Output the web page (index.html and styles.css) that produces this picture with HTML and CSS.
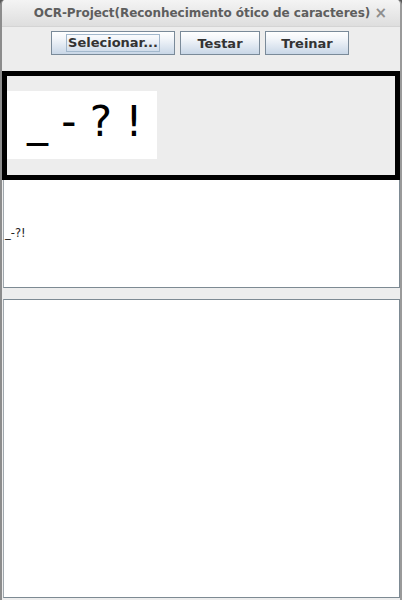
FILE: index.html
```html
<!DOCTYPE html>
<html>
<head>
<meta charset="utf-8">
<link rel="stylesheet" href="styles.css">
</head>
<body>
<div class="window">
  <div class="titlebar">
    <span class="title">OCR-Project(Reconhecimento ótico de caracteres)</span>
    <span class="close">×</span>
  </div>
  <div class="toolbar">
    <button class="btn btn-select"><span class="focus">Selecionar...</span></button>
    <button class="btn btn-test">Testar</button>
    <button class="btn btn-train">Treinar</button>
  </div>
  <div class="imgpanel">
    <div class="imgbox"><span class="glyphs">_ - ? !</span></div>
  </div>
  <div class="result"><span class="result-text">_-?!</span></div>
  <div class="divider"></div>
  <div class="output"></div>
</div>
</body>
</html>
```

FILE: styles.css
```css
html, body {
  margin: 0;
  padding: 0;
  width: 402px;
  height: 600px;
  overflow: hidden;
  background: #5a5a5a;
}
.window {
  width: 402px;
  height: 600px;
  box-sizing: border-box;
  background: #ededed;
  border-left: 2px solid #8c8c8c;
  border-right: 2px solid #9a9a9a;
  border-radius: 5px 5px 0 0;
  display: flex;
  flex-direction: column;
  overflow: hidden;
}
.titlebar {
  height: 27px;
  flex: none;
  background: linear-gradient(#f4f4f4, #dedede);
  display: flex;
  align-items: center;
  justify-content: center;
  position: relative;
  border-bottom: 1px solid #d4d4d4;
  box-sizing: border-box;
}
.title {
  font-family: "DejaVu Sans", sans-serif;
  font-weight: bold;
  font-size: 12px;
  color: #5e5e5e;
  margin-left: 2px;
  letter-spacing: -0.05px;
}
.close {
  position: absolute;
  right: 13px;
  top: 4px;
  font-family: "DejaVu Sans", sans-serif;
  font-weight: bold;
  font-size: 15px;
  color: #8e8e8e;
}
.toolbar {
  flex: none;
  display: flex;
  gap: 5px;
  padding: 4px 0 0 49px;
  height: 44px;
  box-sizing: border-box;
}
.btn {
  height: 24px;
  margin: 0;
  padding: 0;
  border: 1px solid #7a8a99;
  border-radius: 0;
  background: linear-gradient(#ffffff 0%, #f3f6fa 30%, #c9d7e7 100%);
  font-family: "DejaVu Sans", sans-serif;
  font-weight: bold;
  font-size: 13px;
  color: #333333;
  display: flex;
  align-items: center;
  justify-content: center;
  box-sizing: border-box;
}
.btn-select { width: 124px; }
.btn-test { width: 80px; }
.btn-train { width: 84px; }
.focus {
  border: 1px solid #a3b8cc;
  padding: 0 1px 1px 1px;
  line-height: 15px;
}
.imgpanel {
  flex: none;
  height: 109px;
  border: 5px solid #000;
  box-sizing: border-box;
  background: #ededed;
  padding-top: 15px;
}
.imgbox {
  width: 150px;
  height: 68px;
  background: #ffffff;
  box-sizing: border-box;
  padding-left: 20px;
}
.glyphs {
  font-family: "DejaVu Sans", sans-serif;
  font-size: 42px;
  line-height: 61px;
  color: #000;
  white-space: pre;
}
.result {
  flex: none;
  height: 108px;
  background: #ffffff;
  box-sizing: border-box;
  margin: 0 0 0 1px;
  border-right: 1px solid #7d8a93;
  border-left: 1px solid #a0a8ae;
  border-bottom: 1px solid #7d8a93;
  display: flex;
  align-items: center;
  padding-left: 1px;
  padding-bottom: 1px;
}
.result-text {
  font-family: "DejaVu Sans", sans-serif;
  font-size: 11.5px;
  color: #222;
}
.divider {
  flex: none;
  height: 11px;
  background: #ededed;
}
.output {
  flex: none;
  height: 299px;
  background: #ffffff;
  box-sizing: border-box;
  margin-left: 1px;
  border: 1px solid #7d8a93;
  border-left-color: #a0a8ae;
}
```
